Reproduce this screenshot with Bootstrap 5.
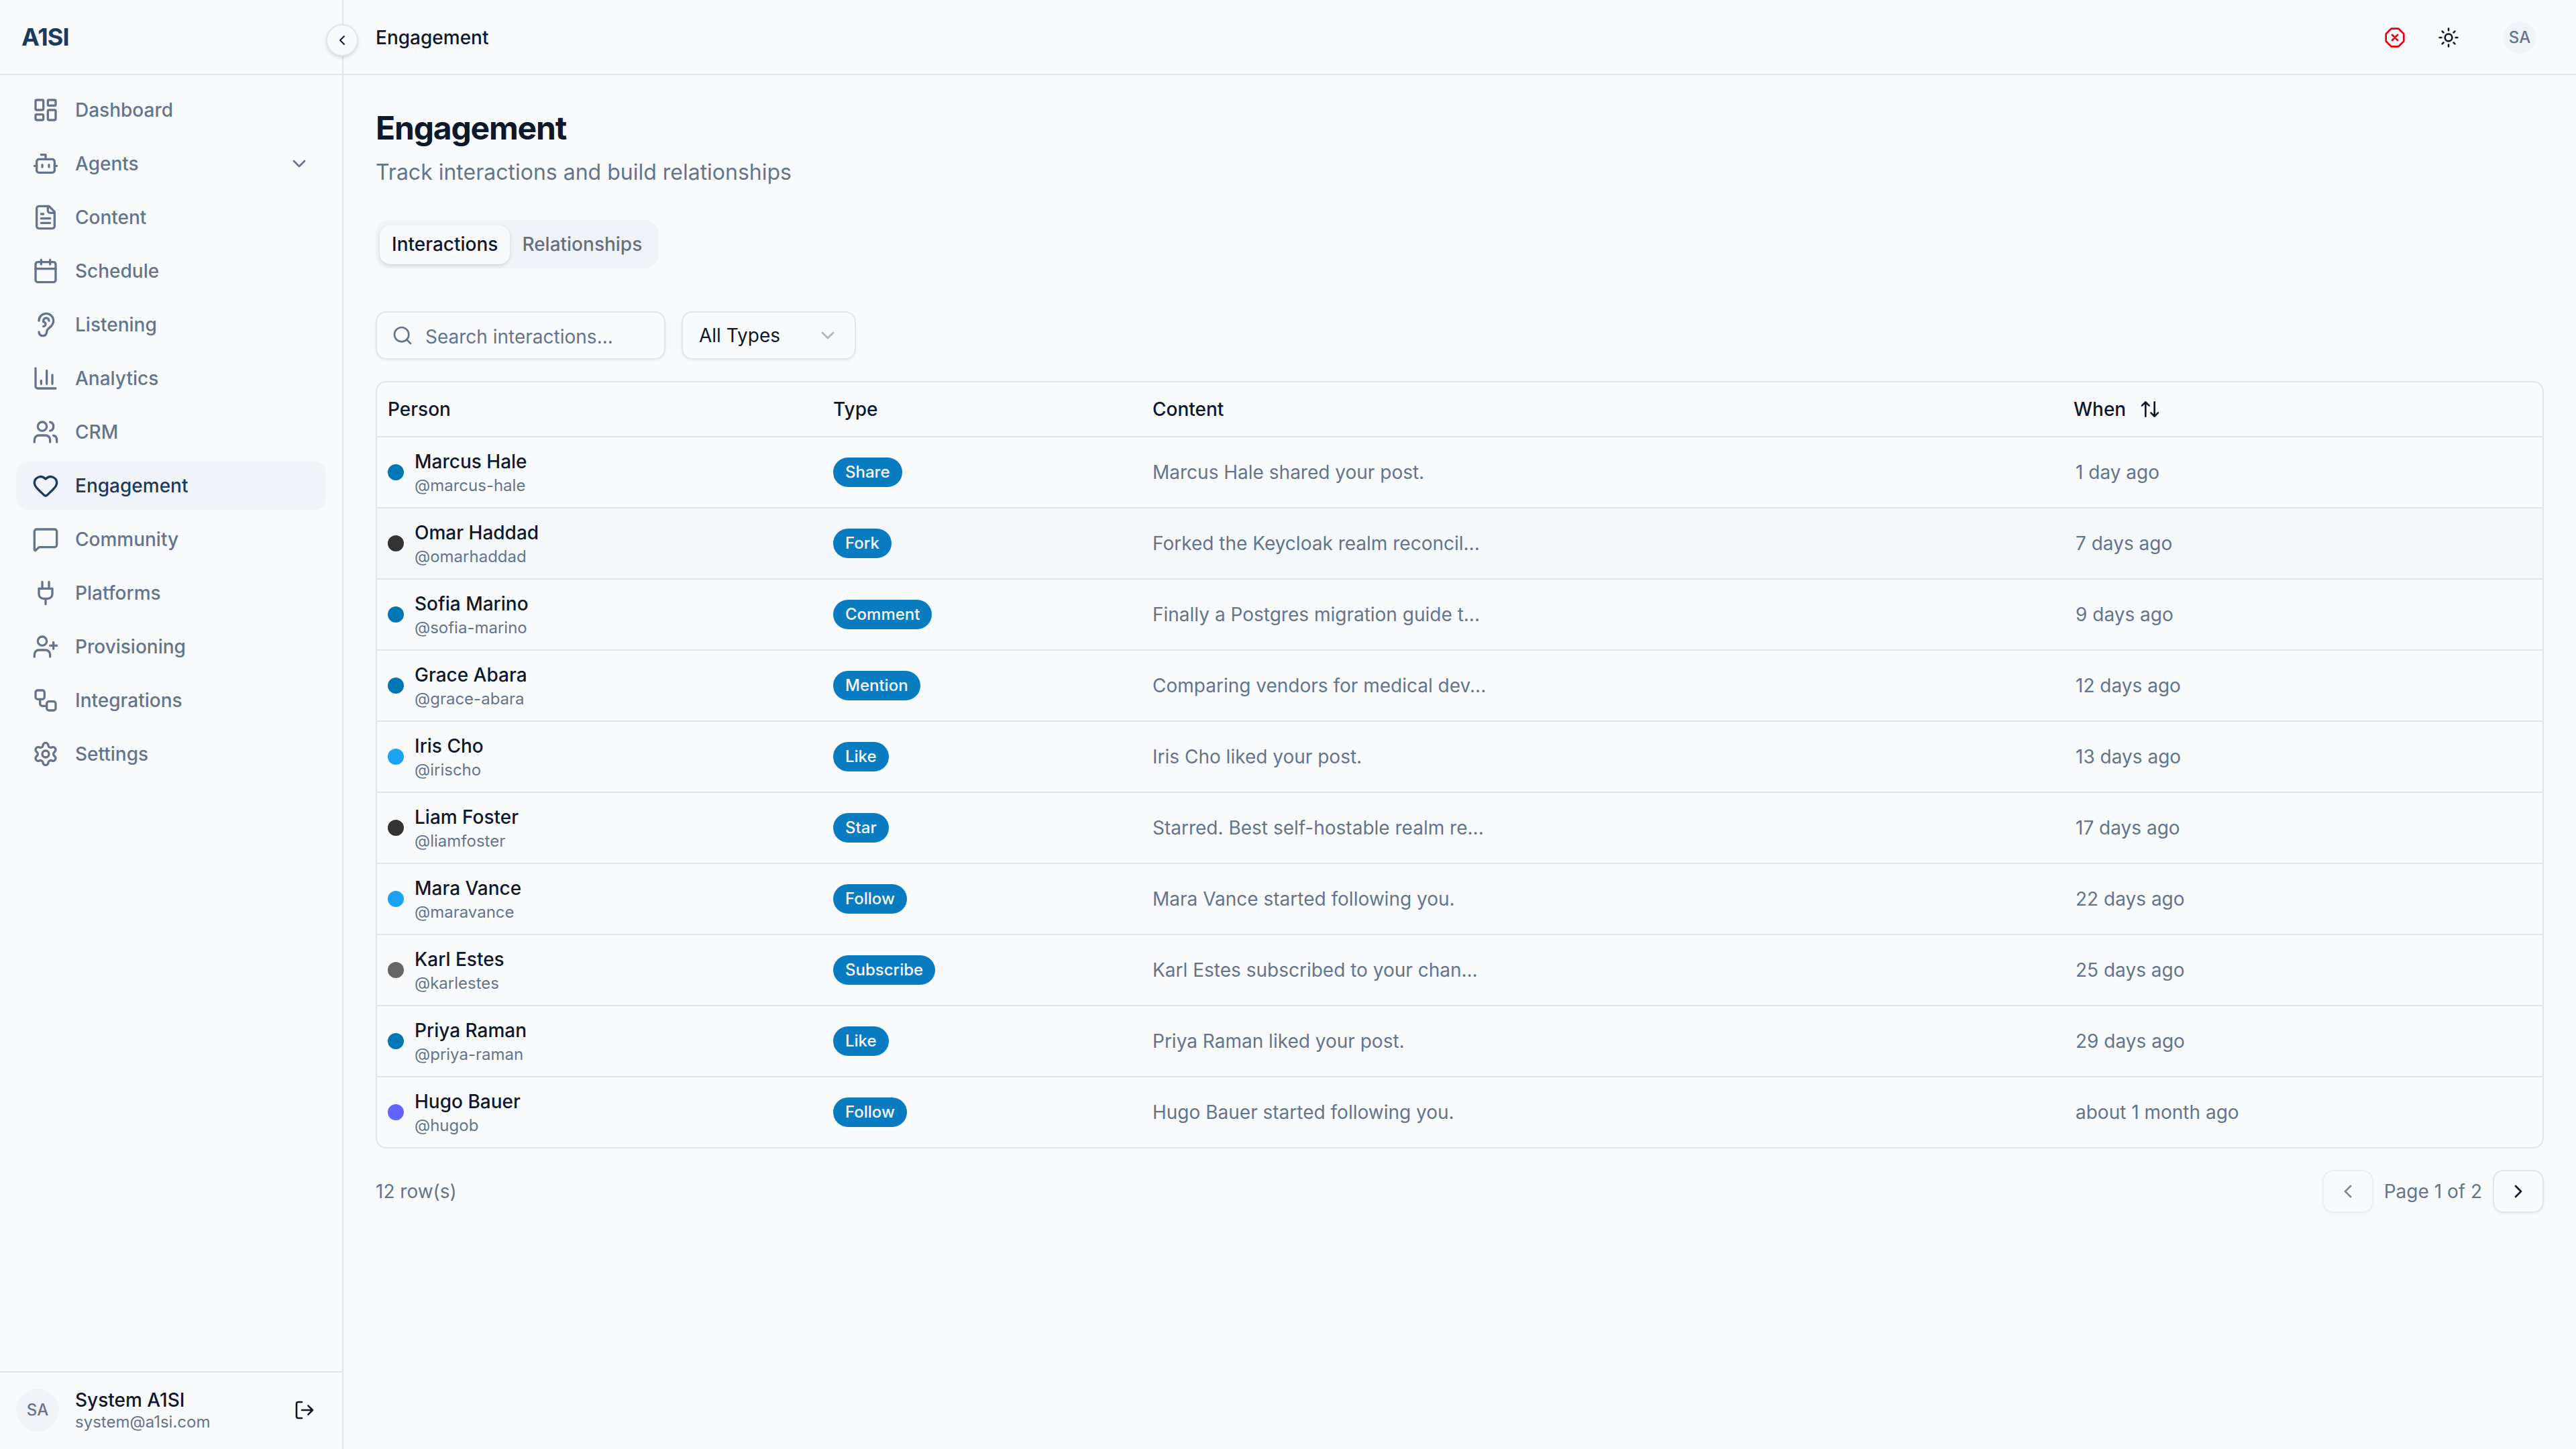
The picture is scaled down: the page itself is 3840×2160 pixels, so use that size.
<!DOCTYPE html>
<html lang="en">
<head>
<meta charset="utf-8">
<meta name="viewport" content="width=device-width, initial-scale=1">
<title>Engagement - A1SI</title>
<link href="https://cdn.jsdelivr.net/npm/bootstrap@5.3.0/dist/css/bootstrap.min.css" rel="stylesheet">
<style>
  :root { --ink:#0f172a; --muted:#64748b; --line:#e0e6ed; --soft:#f0f4f9; --brand:#1e3a5a; --page:#f8fafc; --pill:#087bc1; }
  html { font-size:32px; }
  body { font-family:Inter,"Liberation Sans",sans-serif; font-size:28px; line-height:40px; color:var(--ink); background:var(--page); height:100vh; overflow:hidden; }
  svg.ico { width:32px; height:32px; fill:none; stroke:currentColor; stroke-width:2; stroke-linecap:round; stroke-linejoin:round; flex:none; display:block; }
  .ink { color:var(--ink); } .soft-text { color:var(--muted); }
  .fw-medium { font-weight:500; }
  .text-xs { font-size:24px; line-height:32px; }

  .side { width:512px; border-right:2px solid var(--line); }
  .side-head { height:112px; border-bottom:2px solid var(--line); padding:0 32px; }
  .brand-name { font-size:36px; line-height:56px; font-weight:700; letter-spacing:-.025em; color:var(--brand); }
  .side-toggle { width:48px; height:48px; top:36px; right:-24px; z-index:5; border:2px solid var(--line); background:var(--page); box-shadow:0 2px 6px rgba(0,0,0,.1),0 2px 4px -2px rgba(0,0,0,.1); }
  .side-toggle .ico { width:24px; height:24px; }
  .side-nav { padding:16px 24px; gap:8px; }
  .side-nav .nav-link { height:72px; padding:0 24px; gap:24px; border-radius:16px; color:var(--muted); font-weight:500; }
  .side-nav .nav-link > .ico:first-child { width:40px; height:40px; }
  .side-nav .nav-link.active { background:var(--soft); color:var(--brand); }
  .side-foot { border-top:2px solid var(--line); padding:24px 24px 26px; height:116px; gap:24px; }
  .who { line-height:35px; padding-top:1px; }
  .who-mail { font-size:24px; line-height:30px; }
  .face { border-radius:50%; background:var(--soft); color:var(--muted); font-size:24px; font-weight:500; width:64px; height:64px; }
  .face-sm { width:48px; height:48px; margin:0 12px 0 46px; }
  .exit-btn { width:64px; height:64px; }

  .topbar { height:112px; border-bottom:2px solid var(--line); padding:2px 48px 0; }
  .tool-btn { width:72px; height:72px; }
  .text-stop { color:#e7000b; }
  .page-title { font-size:48px; line-height:62px; font-weight:700; letter-spacing:-.025em; }
  .page-sub { font-size:32px; line-height:48px; padding-top:11px; }

  .seg { margin-top:47px; height:72px; padding:8px 7px 6px 6px; border-radius:20px; background:var(--soft); }
  .seg .nav-link { height:58px; padding:0 18px; line-height:56px; border-radius:16px; font-weight:500; color:#69707d; }
  .seg .nav-link.active { background:var(--page); color:var(--ink); box-shadow:0 2px 6px rgba(0,0,0,.1),0 2px 4px -2px rgba(0,0,0,.1); }

  .filters { margin-top:64px; gap:24px; }
  .field { height:72px; border:2px solid var(--line); border-radius:16px; box-shadow:0 2px 4px rgba(0,0,0,.05); background:var(--page); }
  .search-box { width:432px; padding:0 22px; gap:18px; }
  .search-box input { border:0; padding:4px 0 0; background:transparent; font-size:28px; outline:0; min-width:0; color:var(--ink); }
  .search-box input::placeholder { color:var(--muted); opacity:1; }
  .type-box { width:260px; padding:0 24px; }

  .grid-box { border:2px solid var(--line); border-radius:16px; overflow:hidden; }
  .grid-box table { --bs-table-bg:transparent; table-layout:fixed; border-collapse:separate; border-spacing:0; color:var(--ink); }
  .grid-box th { height:82px; padding:0 16px; font-weight:500; vertical-align:middle; border-bottom:2px solid var(--line); }
  .grid-box td { height:106px; padding:16px; vertical-align:middle; border-bottom:2px solid var(--line); }
  .grid-box tbody tr:last-child td { border-bottom:0; height:104px; }
  .grid-box tr.hot td { background:#f4f8fb; }
  .c-person { width:664px; } .c-type { width:476px; } .c-content { width:1376px; }
  .sort-btn { gap:20px; margin-left:-3px; }
  .dot { width:24px; height:24px; border-radius:50%; flex:none; }
  .dot-in { background:#0077b5; } .dot-gh { background:#333; } .dot-tw { background:#1da1f2; } .dot-gray { background:#666; } .dot-ma { background:#6364ff; }
  .pill { display:inline-flex; height:44px; padding:0 18px; align-items:center; border-radius:22px; background:var(--pill); color:#f8fafc; font-size:24px; font-weight:500; line-height:32px; vertical-align:middle; }
  .pg-btn { width:76px; height:64px; border:2px solid var(--line); border-radius:16px; background:var(--page); color:var(--ink); box-shadow:0 2px 4px rgba(0,0,0,.05); padding:0; }
  .pg-btn:disabled { opacity:.5; }
</style>
</head>
<body class="d-flex">
<aside class="side d-flex flex-column position-relative flex-shrink-0 h-100">
  <div class="side-head d-flex align-items-center"><span class="brand-name">A1SI</span></div>
  <button class="side-toggle position-absolute rounded-circle d-flex align-items-center justify-content-center p-0 ink" aria-label="Collapse"><svg class="ico" viewBox="0 0 24 24"><path d="m15 18-6-6 6-6"/></svg></button>
  <nav class="side-nav nav flex-column flex-nowrap flex-grow-1">
    <a class="nav-link d-flex align-items-center" href="#"><svg class="ico" viewBox="0 0 24 24"><rect width="7" height="9" x="3" y="3" rx="1"/><rect width="7" height="5" x="14" y="3" rx="1"/><rect width="7" height="9" x="14" y="12" rx="1"/><rect width="7" height="5" x="3" y="16" rx="1"/></svg>Dashboard</a>
    <a class="nav-link d-flex align-items-center" href="#"><svg class="ico" viewBox="0 0 24 24"><path d="M12 8V4H8"/><rect width="16" height="12" x="4" y="8" rx="2"/><path d="M2 14h2M20 14h2M15 13v2M9 13v2"/></svg>Agents<svg class="ico ms-auto" viewBox="0 0 24 24"><path d="m6 9 6 6 6-6"/></svg></a>
    <a class="nav-link d-flex align-items-center" href="#"><svg class="ico" viewBox="0 0 24 24"><path d="M15 2H6a2 2 0 0 0-2 2v16a2 2 0 0 0 2 2h12a2 2 0 0 0 2-2V7Z"/><path d="M14 2v4a2 2 0 0 0 2 2h4M10 9H8M16 13H8M16 17H8"/></svg>Content</a>
    <a class="nav-link d-flex align-items-center" href="#"><svg class="ico" viewBox="0 0 24 24"><path d="M8 2v4M16 2v4"/><rect width="18" height="18" x="3" y="4" rx="2"/><path d="M3 10h18"/></svg>Schedule</a>
    <a class="nav-link d-flex align-items-center" href="#"><svg class="ico" viewBox="0 0 24 24"><path d="M6 8.5a6.5 6.5 0 1 1 13 0c0 6-6 6-6 10a3.5 3.5 0 1 1-7 0"/><path d="M15 8.5a2.5 2.5 0 0 0-5 0v1a2 2 0 1 1 0 4"/></svg>Listening</a>
    <a class="nav-link d-flex align-items-center" href="#"><svg class="ico" viewBox="0 0 24 24"><path d="M3 3v16a2 2 0 0 0 2 2h16M18 17V9M13 17V5M8 17v-3"/></svg>Analytics</a>
    <a class="nav-link d-flex align-items-center" href="#"><svg class="ico" viewBox="0 0 24 24"><path d="M16 21v-2a4 4 0 0 0-4-4H6a4 4 0 0 0-4 4v2"/><circle cx="9" cy="7" r="4"/><path d="M22 21v-2a4 4 0 0 0-3-3.87M16 3.13a4 4 0 0 1 0 7.75"/></svg>CRM</a>
    <a class="nav-link active d-flex align-items-center" href="#"><svg class="ico" viewBox="0 0 24 24"><path d="M2 9.5a5.5 5.5 0 0 1 9.591-3.676.56.56 0 0 0 .818 0A5.49 5.49 0 0 1 22 9.5c0 2.29-1.5 4-3 5.5l-5.492 5.313a2 2 0 0 1-3 .019L5 15c-1.5-1.5-3-3.2-3-5.5"/></svg>Engagement</a>
    <a class="nav-link d-flex align-items-center" href="#"><svg class="ico" viewBox="0 0 24 24"><path d="M22 17a2 2 0 0 1-2 2H6.828a2 2 0 0 0-1.414.586l-2.202 2.202A.71.71 0 0 1 2 21.286V5a2 2 0 0 1 2-2h16a2 2 0 0 1 2 2z"/></svg>Community</a>
    <a class="nav-link d-flex align-items-center" href="#"><svg class="ico" viewBox="0 0 24 24"><path d="M12 22v-5M9 8V2M15 8V2M18 8v5a4 4 0 0 1-4 4h-4a4 4 0 0 1-4-4V8Z"/></svg>Platforms</a>
    <a class="nav-link d-flex align-items-center" href="#"><svg class="ico" viewBox="0 0 24 24"><path d="M16 21v-2a4 4 0 0 0-4-4H6a4 4 0 0 0-4 4v2"/><circle cx="9" cy="7" r="4"/><path d="M19 8v6M22 11h-6"/></svg>Provisioning</a>
    <a class="nav-link d-flex align-items-center" href="#"><svg class="ico" viewBox="0 0 24 24"><rect width="8" height="8" x="3" y="3" rx="2"/><path d="M7 11v4a2 2 0 0 0 2 2h4"/><rect width="8" height="8" x="13" y="13" rx="2"/></svg>Integrations</a>
    <a class="nav-link d-flex align-items-center" href="#"><svg class="ico" viewBox="0 0 24 24"><path d="M9.671 4.136a2.34 2.34 0 0 1 4.659 0 2.34 2.34 0 0 0 3.319 1.915 2.34 2.34 0 0 1 2.33 4.033 2.34 2.34 0 0 0 0 3.831 2.34 2.34 0 0 1-2.33 4.033 2.34 2.34 0 0 0-3.319 1.915 2.34 2.34 0 0 1-4.659 0 2.34 2.34 0 0 0-3.32-1.915 2.34 2.34 0 0 1-2.33-4.033 2.34 2.34 0 0 0 0-3.831A2.34 2.34 0 0 1 6.35 6.051a2.34 2.34 0 0 0 3.319-1.915"/><circle cx="12" cy="12" r="3"/></svg>Settings</a>
  </nav>
  <div class="side-foot d-flex align-items-center">
    <span class="face d-flex align-items-center justify-content-center flex-shrink-0">SA</span>
    <div class="flex-grow-1"><div class="who fw-medium">System A1SI</div><div class="who-mail soft-text">system@a1si.com</div></div>
    <span class="exit-btn d-flex align-items-center justify-content-center"><svg class="ico" viewBox="0 0 24 24"><path d="m16 17 5-5-5-5M21 12H9M9 21H5a2 2 0 0 1-2-2V5a2 2 0 0 1 2-2h4"/></svg></span>
  </div>
</aside>

<div class="flex-grow-1 d-flex flex-column">
  <header class="topbar d-flex align-items-center">
    <span class="fw-medium me-auto">Engagement</span>
    <span class="tool-btn d-flex align-items-center justify-content-center me-1"><svg class="ico text-stop" viewBox="0 0 24 24"><path d="m15 9-6 6M9 9l6 6M2.586 16.726A2 2 0 0 1 2 15.312V8.688a2 2 0 0 1 .586-1.414l4.688-4.688A2 2 0 0 1 8.688 2h6.624a2 2 0 0 1 1.414.586l4.688 4.688A2 2 0 0 1 22 8.688v6.624a2 2 0 0 1-.586 1.414l-4.688 4.688a2 2 0 0 1-1.414.586H8.688a2 2 0 0 1-1.414-.586z"/></svg></span>
    <span class="tool-btn d-flex align-items-center justify-content-center"><svg class="ico" viewBox="0 0 24 24"><circle cx="12" cy="12" r="4"/><path d="M12 2v2M12 20v2M4.93 4.93l1.41 1.41M17.66 17.66l1.41 1.41M2 12h2M20 12h2M6.34 17.66l-1.41 1.41M19.07 4.93l-1.41 1.41"/></svg></span>
    <span class="face face-sm d-flex align-items-center justify-content-center">SA</span>
  </header>

  <main class="p-4">
    <h1 class="page-title m-0">Engagement</h1>
    <p class="page-sub soft-text mb-0">Track interactions and build relationships</p>
    <div class="d-flex">
      <nav class="seg nav flex-nowrap"><a class="nav-link active" href="#">Interactions</a><a class="nav-link" href="#">Relationships</a></nav>
    </div>
    <div class="filters d-flex">
      <label class="field search-box d-flex align-items-center soft-text"><svg class="ico" viewBox="0 0 24 24"><path d="m21 21-4.34-4.34"/><circle cx="11" cy="11" r="8"/></svg><input class="flex-grow-1" type="text" placeholder="Search interactions..."></label>
      <div class="field type-box d-flex align-items-center justify-content-between">All Types<svg class="ico soft-text opacity-50" viewBox="0 0 24 24"><path d="m6 9 6 6 6-6"/></svg></div>
    </div>
    <div class="grid-box mt-3">
      <table class="table table-borderless mb-0">
        <thead><tr><th class="c-person">Person</th><th class="c-type">Type</th><th class="c-content">Content</th><th><span class="sort-btn d-inline-flex align-items-center">When<svg class="ico" viewBox="0 0 24 24"><path d="m21 16-4 4-4-4M17 20V4M3 8l4-4 4 4M7 4v16"/></svg></span></th></tr></thead>
        <tbody>
          <tr><td><div class="d-flex align-items-center gap-2"><span class="dot dot-in"></span><div><div class="fw-medium">Marcus Hale</div><div class="text-xs soft-text">@marcus-hale</div></div></div></td><td><span class="pill">Share</span></td><td><span class="soft-text">Marcus Hale shared your post.</span></td><td><span class="soft-text">1 day ago</span></td></tr>
          <tr class="hot"><td><div class="d-flex align-items-center gap-2"><span class="dot dot-gh"></span><div><div class="fw-medium">Omar Haddad</div><div class="text-xs soft-text">@omarhaddad</div></div></div></td><td><span class="pill">Fork</span></td><td><span class="soft-text">Forked the Keycloak realm reconcil...</span></td><td><span class="soft-text">7 days ago</span></td></tr>
          <tr><td><div class="d-flex align-items-center gap-2"><span class="dot dot-in"></span><div><div class="fw-medium">Sofia Marino</div><div class="text-xs soft-text">@sofia-marino</div></div></div></td><td><span class="pill">Comment</span></td><td><span class="soft-text">Finally a Postgres migration guide t...</span></td><td><span class="soft-text">9 days ago</span></td></tr>
          <tr><td><div class="d-flex align-items-center gap-2"><span class="dot dot-in"></span><div><div class="fw-medium">Grace Abara</div><div class="text-xs soft-text">@grace-abara</div></div></div></td><td><span class="pill">Mention</span></td><td><span class="soft-text">Comparing vendors for medical dev...</span></td><td><span class="soft-text">12 days ago</span></td></tr>
          <tr><td><div class="d-flex align-items-center gap-2"><span class="dot dot-tw"></span><div><div class="fw-medium">Iris Cho</div><div class="text-xs soft-text">@irischo</div></div></div></td><td><span class="pill">Like</span></td><td><span class="soft-text">Iris Cho liked your post.</span></td><td><span class="soft-text">13 days ago</span></td></tr>
          <tr><td><div class="d-flex align-items-center gap-2"><span class="dot dot-gh"></span><div><div class="fw-medium">Liam Foster</div><div class="text-xs soft-text">@liamfoster</div></div></div></td><td><span class="pill">Star</span></td><td><span class="soft-text">Starred. Best self-hostable realm re...</span></td><td><span class="soft-text">17 days ago</span></td></tr>
          <tr><td><div class="d-flex align-items-center gap-2"><span class="dot dot-tw"></span><div><div class="fw-medium">Mara Vance</div><div class="text-xs soft-text">@maravance</div></div></div></td><td><span class="pill">Follow</span></td><td><span class="soft-text">Mara Vance started following you.</span></td><td><span class="soft-text">22 days ago</span></td></tr>
          <tr><td><div class="d-flex align-items-center gap-2"><span class="dot dot-gray"></span><div><div class="fw-medium">Karl Estes</div><div class="text-xs soft-text">@karlestes</div></div></div></td><td><span class="pill">Subscribe</span></td><td><span class="soft-text">Karl Estes subscribed to your chan...</span></td><td><span class="soft-text">25 days ago</span></td></tr>
          <tr><td><div class="d-flex align-items-center gap-2"><span class="dot dot-in"></span><div><div class="fw-medium">Priya Raman</div><div class="text-xs soft-text">@priya-raman</div></div></div></td><td><span class="pill">Like</span></td><td><span class="soft-text">Priya Raman liked your post.</span></td><td><span class="soft-text">29 days ago</span></td></tr>
          <tr><td><div class="d-flex align-items-center gap-2"><span class="dot dot-ma"></span><div><div class="fw-medium">Hugo Bauer</div><div class="text-xs soft-text">@hugob</div></div></div></td><td><span class="pill">Follow</span></td><td><span class="soft-text">Hugo Bauer started following you.</span></td><td><span class="soft-text">about 1 month ago</span></td></tr>
        </tbody>
      </table>
    </div>
    <div class="d-flex align-items-center justify-content-between mt-3">
      <span class="soft-text">12 row(s)</span>
      <div class="d-flex align-items-center gap-2">
        <button class="pg-btn d-flex align-items-center justify-content-center" disabled aria-label="Previous"><svg class="ico" viewBox="0 0 24 24"><path d="m15 18-6-6 6-6"/></svg></button>
        <span class="soft-text">Page 1 of 2</span>
        <button class="pg-btn d-flex align-items-center justify-content-center" aria-label="Next"><svg class="ico" viewBox="0 0 24 24"><path d="m9 18 6-6-6-6"/></svg></button>
      </div>
    </div>
  </main>
</div>
<script src="https://cdn.jsdelivr.net/npm/bootstrap@5.3.0/dist/js/bootstrap.bundle.min.js"></script>
</body>
</html>
